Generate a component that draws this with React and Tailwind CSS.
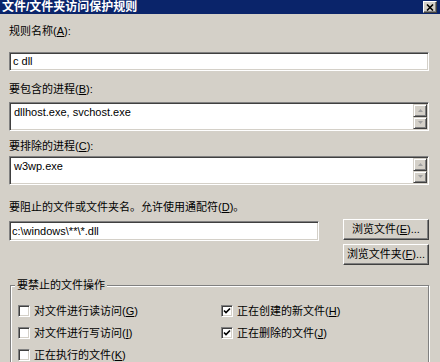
import React from "react";

function U({ children }) {
  return <span className="underline underline-offset-[1px]">{children}</span>;
}

function Sunken({ className = "", children }) {
  return (
    <div
      className={`border border-t-[#808080] border-l-[#808080] border-b-white border-r-white ${className}`}
    >
      <div className="h-full w-full bg-white shadow-[inset_1px_1px_0_#404040,inset_-1px_-1px_0_#d4d0c8] flex overflow-hidden">
        {children}
      </div>
    </div>
  );
}

function Arrow({ up }) {
  return (
    <svg width="7" height="5" viewBox="0 0 7 5">
      {up ? (
        <path d="M3.5 1 L6 4 L1 4 Z" fill="#a0a0a0" />
      ) : (
        <path d="M1 1 L6 1 L3.5 4 Z" fill="#a0a0a0" />
      )}
    </svg>
  );
}

function ScrollBtn({ up }) {
  return (
    <div className="flex-1 border border-t-[#d4d0c8] border-l-[#d4d0c8] border-b-[#404040] border-r-[#404040] bg-[#d4d0c8]">
      <div className="h-full w-full shadow-[inset_1px_1px_0_#fff,inset_-1px_-1px_0_#808080] flex items-center justify-center">
        <Arrow up={up} />
      </div>
    </div>
  );
}

function MultiBox({ text }) {
  return (
    <Sunken className="h-[29px]">
      <div className="flex-1 pl-[4px] pt-[2px] leading-[15px] text-[11px]">{text}</div>
      <div className="w-[14px] flex flex-col py-[1px] mr-[1px]">
        <ScrollBtn up />
        <ScrollBtn />
      </div>
    </Sunken>
  );
}

function Button({ children }) {
  return (
    <div className="h-[21px] w-[86px] border border-t-white border-l-white border-b-[#404040] border-r-[#404040] bg-[#d4d0c8]">
      <div className="h-full w-full shadow-[inset_-1px_-1px_0_#808080] flex items-center justify-center leading-[13px]">
        {children}
      </div>
    </div>
  );
}

function Check({ checked, children }) {
  return (
    <div className="h-[22px] flex items-center">
      <div className="w-[12px] h-[12px] border border-t-[#808080] border-l-[#808080] border-b-white border-r-white">
        <div className="w-full h-full bg-white shadow-[inset_1px_1px_0_#404040,inset_-1px_-1px_0_#d4d0c8] flex items-center justify-center">
          {checked && (
            <svg width="8" height="8" viewBox="0 0 8 8">
              <path d="M1 3.5 L3 5.5 L7 1.5" stroke="#000" strokeWidth="1.7" fill="none" />
            </svg>
          )}
        </div>
      </div>
      <span className="ml-[4px] leading-[13px]">{children}</span>
    </div>
  );
}

export default function App() {
  return (
    <div className="w-[440px] h-[362px] overflow-hidden bg-[#d4d0c8] text-black text-[11px] font-['Liberation_Sans','Noto_Sans_CJK_SC',sans-serif]">
      <div className="h-[14px] bg-[#0a246a] flex items-center justify-between pl-[2px] pr-[3px]">
        <span className="text-white font-bold text-[12px] leading-[14px]">文件/文件夹访问保护规则</span>
        <div className="w-[14px] h-[12px] border border-t-white border-l-white border-b-[#404040] border-r-[#404040] bg-[#d4d0c8]">
          <div className="w-full h-full shadow-[inset_-1px_-1px_0_#808080] flex items-center justify-center">
            <svg width="8" height="7" viewBox="0 0 8 7">
              <path d="M1 0.5 L7 6.5 M7 0.5 L1 6.5" stroke="#000" strokeWidth="1.6" />
            </svg>
          </div>
        </div>
      </div>

      <div className="pl-[9px] pr-[11px]">
        <div className="mt-[11px] leading-[13px]">
          规则名称(<U>A</U>):
        </div>
        <Sunken className="mt-[14px] h-[19px]">
          <div className="pl-[3px] flex items-center text-[11px]">c dll</div>
        </Sunken>

        <div className="mt-[12px] leading-[13px]">
          要包含的进程(<U>B</U>):
        </div>
        <div className="mt-[6px]">
          <MultiBox text="dllhost.exe, svchost.exe" />
        </div>

        <div className="mt-[9px] leading-[13px]">
          要排除的进程(<U>C</U>):
        </div>
        <div className="mt-[3px]">
          <MultiBox text="w3wp.exe" />
        </div>

        <div className="mt-[16px] leading-[13px]">
          要阻止的文件或文件夹名。允许使用通配符(<U>D</U>)。
        </div>
        <div className="mt-[5px] flex items-start justify-between">
          <Sunken className="mt-[2px] h-[20px] w-[310px]">
            <div className="pl-[2px] flex items-center text-[11px]">c:\windows\**\*.dll</div>
          </Sunken>
          <div className="flex flex-col gap-[4px]">
            <Button>
              浏览文件(<U>E</U>)...
            </Button>
            <Button>
              浏览文件夹(<U>F</U>)...
            </Button>
          </div>
        </div>

        <fieldset className="mt-[14px] ml-[1px] border border-[#808080] shadow-[inset_1px_1px_0_#fff,1px_1px_0_#fff] pl-[7px] pt-[8px] min-w-0">
          <legend className="ml-[-3px] px-[2px] leading-[13px] bg-[#d4d0c8]">要禁止的文件操作</legend>
          <div className="grid grid-cols-[203px_1fr]">
            <Check>
              对文件进行读访问(<U>G</U>)
            </Check>
            <Check checked>
              正在创建的新文件(<U>H</U>)
            </Check>
            <Check>
              对文件进行写访问(<U>I</U>)
            </Check>
            <Check checked>
              正在删除的文件(<U>J</U>)
            </Check>
            <Check>
              正在执行的文件(<U>K</U>)
            </Check>
          </div>
        </fieldset>
      </div>
    </div>
  );
}
